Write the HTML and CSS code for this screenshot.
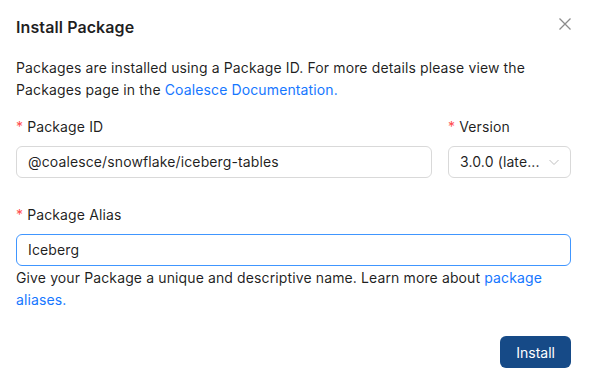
FILE: index.html
```html
<!DOCTYPE html>
<html lang="en">
<head>
    <meta charset="UTF-8">
    <title>Install Package</title>
    <link rel="stylesheet" href="styles.css">
</head>
<body>
    <div class="modal">
        <div class="modal-header">
            <h2>Install Package</h2>
            <button class="close" aria-label="Close">
                <svg width="12" height="12" viewBox="0 0 12 12"><path d="M0.5 0.5L11.5 11.5M11.5 0.5L0.5 11.5" stroke="#8c8c8c" stroke-width="1.3" fill="none"/></svg>
            </button>
        </div>
        <p class="intro">Packages are installed using a Package ID. For more details please view the Packages page in the <a href="#">Coalesce Documentation.</a></p>

        <div class="row">
            <div class="field grow">
                <label><span class="req">*</span>Package ID</label>
                <div class="input">@coalesce/snowflake/iceberg-tables</div>
            </div>
            <div class="field version">
                <label><span class="req">*</span>Version</label>
                <div class="input select">
                    <span>3.0.0 (late...</span>
                    <svg width="12" height="12" viewBox="0 0 12 12"><path d="M1.5 4L6 8.5L10.5 4" stroke="#bfbfbf" stroke-width="1" fill="none"/></svg>
                </div>
            </div>
        </div>

        <div class="field alias">
            <label><span class="req">*</span>Package Alias</label>
            <div class="input focused">Iceberg</div>
            <p class="help">Give your Package a unique and descriptive name. Learn more about <a href="#">package aliases.</a></p>
        </div>

        <div class="footer">
            <button class="primary">Install</button>
        </div>
    </div>
</body>
</html>
```

FILE: styles.css
```css
body {
    margin: 0;
    font-family: 'Inter', 'Liberation Sans', sans-serif;
    font-size: 14px;
    letter-spacing: 0.12px;
    color: rgba(0, 0, 0, 0.88);
    background: #fff;
}
.modal {
    padding: 16px 20px 0 16px;
}
.modal-header {
    display: flex;
    justify-content: space-between;
    align-items: flex-start;
}
.modal-header h2 {
    margin: 0;
    font-size: 16px;
    font-weight: 600;
    line-height: 22px;
    letter-spacing: 0.1px;
}
.close {
    background: none;
    border: none;
    padding: 0;
    margin: 2px 0 0 0;
    cursor: pointer;
    display: flex;
}
.intro {
    margin: 19px 0 15px 0;
    line-height: 22px;
}
a {
    color: #1677ff;
    text-decoration: none;
}
.row {
    display: flex;
    gap: 16px;
}
.grow {
    flex: 1;
}
.version {
    width: 123px;
}
label {
    display: block;
    line-height: 22px;
    margin-bottom: 8px;
}
.req {
    color: #ff4d4f;
    margin-right: 4px;
}
.input {
    box-sizing: border-box;
    height: 32px;
    border: 1px solid #d9d9d9;
    border-radius: 6px;
    padding: 0 11px;
    display: flex;
    align-items: center;
    line-height: 22px;
}
.select {
    justify-content: space-between;
    padding-right: 10px;
}
.focused {
    border-color: #4096ff;
}
.alias {
    margin-top: 26px;
}
.help {
    margin: 1px 0 0 0;
    line-height: 22px;
}
.footer {
    display: flex;
    justify-content: flex-end;
    margin-top: 25px;
}
.primary {
    background: #164a87;
    color: #fff;
    border: none;
    border-radius: 6px;
    height: 32px;
    padding: 0 16px;
    font-family: inherit;
    font-size: 14px;
    cursor: pointer;
}
```
